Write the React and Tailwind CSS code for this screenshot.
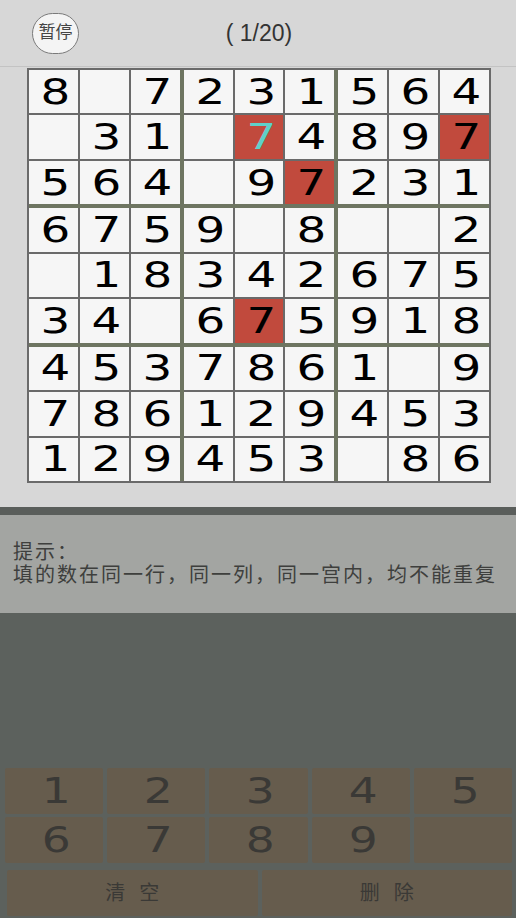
import React from 'react';

const board = [
  ['8', '', '7', '2', '3', '1', '5', '6', '4'],
  ['', '3', '1', '', '7', '4', '8', '9', '7'],
  ['5', '6', '4', '', '9', '7', '2', '3', '1'],
  ['6', '7', '5', '9', '', '8', '', '', '2'],
  ['', '1', '8', '3', '4', '2', '6', '7', '5'],
  ['3', '4', '', '6', '7', '5', '9', '1', '8'],
  ['4', '5', '3', '7', '8', '6', '1', '', '9'],
  ['7', '8', '6', '1', '2', '9', '4', '5', '3'],
  ['1', '2', '9', '4', '5', '3', '', '8', '6'],
];

// conflicting cells: row-col -> text colour
const marked = {
  '1-4': 'text-[#5fd0c9]',
  '1-8': 'text-black',
  '2-5': 'text-black',
  '5-4': 'text-black',
};

const Cell = ({ r, c }) => {
  const key = `${r}-${c}`;
  const hit = marked[key];
  return (
    <div className={`flex items-center justify-center ${hit ? 'bg-[#c14a3d]' : 'bg-[#f6f6f6]'}`}>
      <span className={`inline-block translate-x-[2px] scale-x-[1.3] text-[36px] leading-none ${hit || 'text-black'}`}>
        {board[r][c]}
      </span>
    </div>
  );
};

const Box = ({ br, bc }) => (
  <div className="grid grid-cols-3 grid-rows-3 gap-[2px] bg-[#6a6a6a]">
    {[0, 1, 2].map((i) =>
      [0, 1, 2].map((j) => <Cell key={`${i}${j}`} r={br * 3 + i} c={bc * 3 + j} />)
    )}
  </div>
);

const KeyBtn = ({ children, className = '' }) => (
  <div className={`flex items-center justify-center rounded-[2px] bg-[#665c4d] text-[#3a3936] ${className}`}>
    {children}
  </div>
);

export default function App() {
  return (
    <div
      className="w-[516px] h-[918px] overflow-hidden bg-[#5c615d] flex flex-col"
      style={{ fontFamily: '"DejaVu Sans", "Noto Sans CJK SC", sans-serif' }}
    >
      {/* header */}
      <div className="h-[67px] shrink-0 bg-[#d7d7d7] border-b border-[#c3c3c3] flex items-center relative">
        <div className="ml-[32px] w-[47px] h-[41px] rounded-full border-[1.5px] border-[#7a7a7a] bg-[#f4f4f4] flex items-center justify-center text-[17px] text-[#444]">
          暂停
        </div>
        <div
          className="absolute left-0 right-0 top-0 bottom-0 flex items-center justify-center text-[23px] text-[#333] pointer-events-none"
          style={{ fontFamily: '"Liberation Sans", sans-serif' }}
        >
          <span className="ml-[2px]">( 1/20)</span>
        </div>
      </div>

      {/* board area */}
      <div className="bg-[#d7d7d7] pt-[1px] pb-[24px] pl-[27px] shrink-0">
        <div className="w-[464px] h-[415px] border-2 border-[#6a6a6a] bg-[#6e7561] grid grid-cols-3 grid-rows-3 gap-[4px]">
          {[0, 1, 2].map((br) => [0, 1, 2].map((bc) => <Box key={`${br}${bc}`} br={br} bc={bc} />))}
        </div>
      </div>

      <div className="h-[8px] shrink-0 bg-[#5a5e5b]" />

      {/* hint */}
      <div className="h-[98px] shrink-0 bg-[#a3a5a2] pl-[13px] pt-[26px] text-[20px] leading-[23px] tracking-[2px] text-[#3e3f3d]">
        <div>提示：</div>
        <div className="whitespace-nowrap">填的数在同一行，同一列，同一宫内，均不能重复</div>
      </div>

      {/* keypad */}
      <div className="mt-auto pl-[5px] pr-[4px] pb-[2px] flex flex-col">
        <div
          className="grid grid-cols-5 gap-x-[4px] gap-y-[3px] text-[35px] leading-none"
          style={{ fontFamily: '"DejaVu Sans", sans-serif' }}
        >
          {['1', '2', '3', '4', '5', '6', '7', '8', '9', ''].map((n, i) => (
            <KeyBtn key={i} className="h-[46px]">
              <span className="inline-block translate-x-[2px] scale-x-[1.3]">{n}</span>
            </KeyBtn>
          ))}
        </div>
        <div className="mt-[7px] ml-[2px] grid grid-cols-2 gap-[4px] text-[20px] tracking-[14px]">
          <KeyBtn className="h-[46px]">
            <span className="ml-[14px]">清空</span>
          </KeyBtn>
          <KeyBtn className="h-[46px]">
            <span className="ml-[14px]">删除</span>
          </KeyBtn>
        </div>
      </div>
    </div>
  );
}
